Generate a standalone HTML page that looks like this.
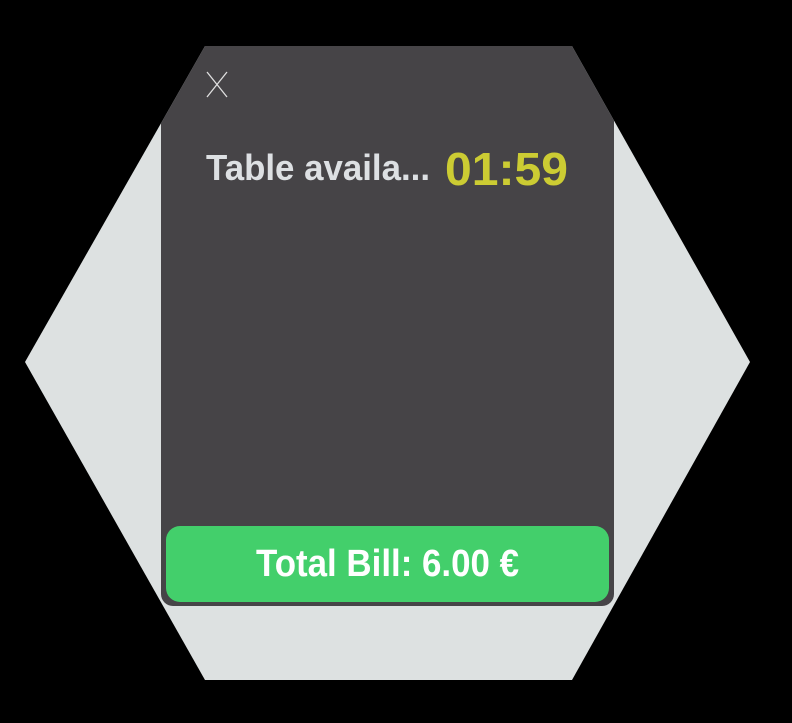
<!DOCTYPE html>
<html><head><style>
html,body{margin:0;padding:0;background:#000;width:792px;height:723px;overflow:hidden}
</style></head><body>
<svg width="792" height="723" viewBox="0 0 792 723" xmlns="http://www.w3.org/2000/svg" style="display:block">
<defs>
<clipPath id="hx"><polygon points="205,46 572,46 750,362 572,680 205,680 25,362"/></clipPath>
</defs>
<polygon points="205,46 572,46 750,362 572,680 205,680 25,362" fill="#dde1e1"/>
<g clip-path="url(#hx)">
<path d="M161,40 H614 V594 a12,12 0 0 1 -12,12 H173 a12,12 0 0 1 -12,-12 Z" fill="#464447"/>
</g>
<path d="M207,72 L227,97 M227,72 L207,97" stroke="#e0e0e0" stroke-width="1.3" fill="none"/>
<text x="206" y="180" font-family="Liberation Sans, sans-serif" font-weight="bold" font-size="36" fill="#dde0e3" textLength="224" lengthAdjust="spacingAndGlyphs">Table availa...</text>
<text x="445" y="185" font-family="Liberation Sans, sans-serif" font-weight="bold" font-size="46" fill="#cccc33" textLength="123" lengthAdjust="spacingAndGlyphs">01:59</text>
<rect x="166" y="526" width="443" height="76" rx="14" fill="#43cf6b"/>
<text x="256" y="576" font-family="Liberation Sans, sans-serif" font-weight="bold" font-size="38" fill="#ffffff" textLength="263" lengthAdjust="spacingAndGlyphs">Total Bill: 6.00 €</text>
</svg>
</body></html>
